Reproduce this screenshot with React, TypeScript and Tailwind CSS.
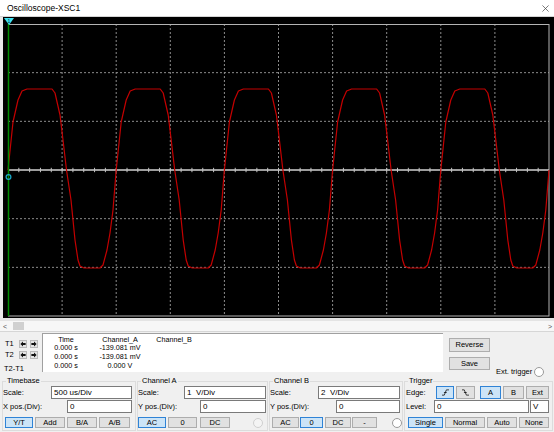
import type { ReactNode } from "react";

const PERIOD = 108.2;
const X0 = 8;
const CY = 170;

// one period of the clipped sine, [dx, dy] from the rising zero crossing
const SHAPE: [number, number][] = [
  [0, 0], [5, -48], [10, -70], [14, -79], [19, -81], [44, -81], [47, -77],
  [52, -55], [55, -30], [58.5, 0], [63, 30], [67, 70], [70, 90], [72, 96],
  [76, 98], [92, 98], [95, 95], [99, 80], [102, 63], [105, 40], [108.2, 0],
];

function wavePath() {
  const pts: string[] = [];
  for (let k = 0; k < 5; k++) {
    for (const [t, d] of SHAPE) {
      if (k > 0 && t === 0) continue;
      pts.push(`${(X0 + k * PERIOD + t).toFixed(1)},${(CY + d).toFixed(1)}`);
    }
  }
  return "M" + pts.join(" L");
}

function Screen() {
  const vx = Array.from({ length: 9 }, (_, i) => 8 + (i + 1) * 54.1);
  const hy = [1, 2, 4, 5].map((k) => 24 + k * 48.67);
  const ticks = Array.from({ length: 49 }, (_, i) => 8 + (i + 1) * 10.82);
  return (
    <svg viewBox="3 17 551 301" className="block h-full w-full">
      <rect x="3" y="17" width="551" height="301" fill="#000" />
      {vx.map((x) => (
        <line key={x} x1={x} y1="24" x2={x} y2="316" stroke="#8c8c8c" strokeWidth="1" strokeDasharray="2 2" />
      ))}
      {hy.map((y) => (
        <line key={y} x1="8" y1={y} x2="549" y2={y} stroke="#8c8c8c" strokeWidth="1" strokeDasharray="2 2" />
      ))}
      <rect x="8.5" y="24.5" width="540.5" height="291.5" fill="none" stroke="#b4b4b4" strokeWidth="1" />
      <line x1="8" y1="170" x2="549" y2="170" stroke="#d2d2d2" strokeWidth="1.5" />
      {ticks.map((x) => (
        <line key={x} x1={x} y1="167.8" x2={x} y2="172.2" stroke="#c4c4c4" strokeWidth="1" />
      ))}
      <path d={wavePath()} fill="none" stroke="#c40000" strokeWidth="1.2" strokeLinejoin="round" />
      <line x1="8.5" y1="24" x2="8.5" y2="316" stroke="#008a00" strokeWidth="1.5" />
      <polygon points="4,18 14,18 9,25" fill="#3fe3f2" />
      <text x="9" y="22.6" fontSize="5" textAnchor="middle" fill="#003040" fontFamily="Liberation Sans, sans-serif">1</text>
      <circle cx="8.5" cy="177" r="2.4" fill="none" stroke="#1aa9c9" strokeWidth="1.2" />
    </svg>
  );
}

function Btn({ children, className, on }: { children: ReactNode; className: string; on?: boolean }) {
  return (
    <div
      className={`flex h-[11px] shrink-0 items-center justify-center border text-[7.5px] leading-none text-black ${
        on ? "border-[#2f83d6] bg-[#cce4f7]" : "border-[#adadad] bg-[#e1e1e1]"
      } ${className}`}
    >
      {children}
    </div>
  );
}

function Field({ value, className }: { value: string; className: string }) {
  return (
    <div className={`flex h-[13px] shrink-0 items-center border border-[#7a7a7a] bg-white pl-[2px] text-[8px] leading-none ${className}`}>
      {value}
    </div>
  );
}

function Radio({ off }: { off?: boolean }) {
  return (
    <div
      className={`h-[10px] w-[10px] shrink-0 rounded-full border ${
        off ? "border-[#cfcfcf] bg-[#f4f4f4]" : "border-[#9a9a9a] bg-white"
      }`}
    />
  );
}

function Group({ title, className, children }: { title: string; className: string; children: ReactNode }) {
  return (
    <fieldset className={`h-[55px] shrink-0 border border-[#dcdcdc] ${className}`}>
      <legend className="ml-[3px] px-[1px] text-[7.5px] leading-[10px]">{title}</legend>
      {children}
    </fieldset>
  );
}

function Arrow({ left }: { left?: boolean }) {
  return (
    <div className="flex h-[8px] w-[8px] items-center justify-center border border-[#b9b9b9] bg-[#e4e4e4]">
      <svg viewBox="0 0 8 8" className="h-[6px] w-[6px]">
        <path
          d={left ? "M0.5 4 L4 0.8 V2.8 H7.5 V5.2 H4 V7.2 Z" : "M7.5 4 L4 0.8 V2.8 H0.5 V5.2 H4 V7.2 Z"}
          fill="#111"
        />
      </svg>
    </div>
  );
}

function EdgeIcon({ rising }: { rising?: boolean }) {
  return (
    <svg viewBox="0 0 10 8" className="h-[7px] w-[9px]">
      <path d={rising ? "M1 7 H3.6 L6 1 H9" : "M1 1 H3.6 L6 7 H9"} fill="none" stroke="#111" strokeWidth="0.9" />
      <path d="M3.2 4 H6.4" stroke="#111" strokeWidth="0.9" />
    </svg>
  );
}

export default function App() {
  return (
    <div className="flex h-[432px] w-[554px] flex-col overflow-hidden bg-[#f0f0f0] font-['Liberation_Sans',Arial,sans-serif] text-black">
      <div className="flex h-[17px] shrink-0 items-center justify-between border-b border-[#d4d4d4] bg-white pl-[7px] pr-[5px]">
        <span className="text-[8.5px] leading-none">Oscilloscope-XSC1</span>
        <svg viewBox="0 0 8 8" className="h-[7px] w-[7px]">
          <path d="M0.5 0.5 L7.5 7.5 M7.5 0.5 L0.5 7.5" stroke="#444" strokeWidth="0.8" />
        </svg>
      </div>

      <div className="flex h-[301px] shrink-0">
        <div className="w-[3px] bg-[#e9e9e9]" />
        <div className="flex-1 bg-black">
          <Screen />
        </div>
      </div>

      <div className="h-[3px] shrink-0 bg-[#e4e4e4]" />
      <div className="flex h-[11px] shrink-0 items-center border-b border-[#d6d6d6] bg-[#f7f7f7] text-[7px] leading-none text-[#555]">
        <span className="ml-[3px] w-[8px]">&lt;</span>
        <div className="ml-[2px] h-[8px] w-[11px] bg-[#d0d0d0]" />
        <span className="ml-auto mr-[2px]">&gt;</span>
      </div>

      <div className="mt-[1px] flex h-[41px] shrink-0">
        <div className="flex w-[42px] shrink-0 flex-col pt-[6px] text-[7.5px] leading-none">
          <div className="flex h-[9px] items-center">
            <span className="w-[19px] pl-[5px]">T1</span>
            <Arrow left />
            <div className="w-[3px]" />
            <Arrow />
          </div>
          <div className="mt-[2px] flex h-[9px] items-center">
            <span className="w-[19px] pl-[5px]">T2</span>
            <Arrow left />
            <div className="w-[3px]" />
            <Arrow />
          </div>
          <span className="mt-[6px] pl-[4px]">T2-T1</span>
        </div>

        <div className="h-[39px] w-[401px] shrink-0 border-l border-t border-[#a0a0a0] bg-white pt-[1.5px] text-[7.2px] leading-[8.7px]">
          <div className="grid grid-cols-[46px_62px_46px] text-center">
            <span>Time</span>
            <span>Channel_A</span>
            <span>Channel_B</span>
            <span>0.000 s</span>
            <span>-139.081 mV</span>
            <span />
            <span>0.000 s</span>
            <span>-139.081 mV</span>
            <span />
            <span>0.000 s</span>
            <span>0.000 V</span>
            <span />
          </div>
        </div>

        <div className="ml-[6px] flex flex-col">
          <div className="mt-[5px] flex h-[14px] w-[41px] items-center justify-center border border-[#adadad] bg-[#e1e1e1] text-[7.5px] leading-none">
            Reverse
          </div>
          <div className="mt-[5px] flex h-[13px] w-[41px] items-center justify-center border border-[#adadad] bg-[#e1e1e1] text-[7.5px] leading-none">
            Save
          </div>
        </div>
        <div className="ml-[6px] mt-[34px] flex h-[10px] items-center gap-[2px]">
          <span className="text-[7.5px] leading-none">Ext. trigger</span>
          <Radio />
        </div>
      </div>

      <div className="flex gap-[1px] pl-[2px] pt-[2px] text-[7.5px] leading-none">
        <Group title="Timebase" className="w-[134px]">
          <div className="flex items-center">
            <span className="w-[48px]">Scale:</span>
            <Field value="500 us/Div" className="w-[81px]" />
          </div>
          <div className="mt-[1px] flex items-center">
            <span className="w-[64px]">X pos.(Div):</span>
            <Field value="0" className="w-[65px]" />
          </div>
          <div className="mt-[4px] flex gap-[2px] pl-[2px]">
            <Btn on className="w-[28px]">Y/T</Btn>
            <Btn className="w-[30px]">Add</Btn>
            <Btn className="w-[30px]">B/A</Btn>
            <Btn className="w-[31px]">A/B</Btn>
          </div>
        </Group>

        <Group title="Channel A" className="w-[131px]">
          <div className="flex items-center">
            <span className="w-[46px]">Scale:</span>
            <Field value="1  V/Div" className="w-[82px] whitespace-pre" />
          </div>
          <div className="mt-[1px] flex items-center">
            <span className="w-[62px]">Y pos.(Div):</span>
            <Field value="0" className="w-[66px]" />
          </div>
          <div className="mt-[4px] flex items-center gap-[2px]">
            <Btn on className="w-[28px]">AC</Btn>
            <Btn className="w-[29px]">0</Btn>
            <Btn className="ml-[1px] w-[30px]">DC</Btn>
            <div className="ml-[21px]">
              <Radio off />
            </div>
          </div>
        </Group>

        <Group title="Channel B" className="w-[133px]">
          <div className="flex items-center">
            <span className="w-[48px]">Scale:</span>
            <Field value="2  V/Div" className="w-[82px] whitespace-pre" />
          </div>
          <div className="mt-[1px] flex items-center">
            <span className="w-[66px]">Y pos.(Div):</span>
            <Field value="0" className="w-[64px]" />
          </div>
          <div className="mt-[4px] flex items-center gap-[1px] pl-[2px]">
            <Btn className="w-[27px]">AC</Btn>
            <Btn on className="w-[23px]">0</Btn>
            <Btn className="ml-[1px] w-[26px]">DC</Btn>
            <Btn className="w-[25px]">-</Btn>
            <div className="ml-[14px]">
              <Radio />
            </div>
          </div>
        </Group>

        <Group title="Trigger" className="w-[149px]">
          <div className="flex items-center">
            <span className="w-[31px] pl-[1px]">Edge:</span>
            <Btn on className="h-[13px] w-[18px]">
              <EdgeIcon rising />
            </Btn>
            <Btn className="ml-[2px] h-[13px] w-[19px]">
              <EdgeIcon />
            </Btn>
            <Btn on className="ml-[5px] h-[13px] w-[21px]">A</Btn>
            <Btn className="ml-[2px] h-[13px] w-[21px]">B</Btn>
            <Btn className="ml-[2px] h-[13px] w-[23px]">Ext</Btn>
          </div>
          <div className="mt-[1px] flex items-center">
            <span className="w-[29px] pl-[1px]">Level:</span>
            <Field value="0" className="w-[95px]" />
            <Field value="V" className="ml-[1px] w-[19px]" />
          </div>
          <div className="mt-[4px] flex gap-[2px] pl-[3px]">
            <Btn on className="w-[35px]">Single</Btn>
            <Btn className="w-[40px]">Normal</Btn>
            <Btn className="w-[30px]">Auto</Btn>
            <Btn className="w-[30px]">None</Btn>
          </div>
        </Group>
      </div>
    </div>
  );
}
